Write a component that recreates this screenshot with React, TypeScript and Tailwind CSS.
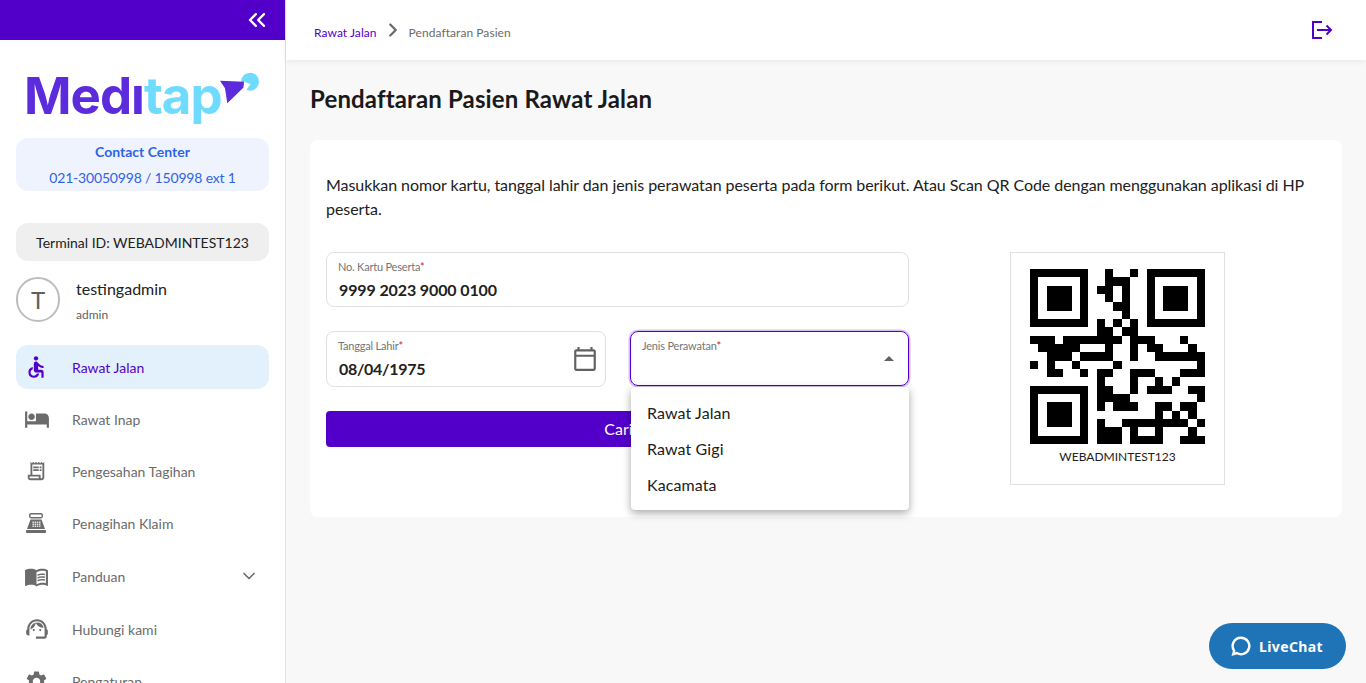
import { ChevronsLeft, ChevronDown, ChevronRight } from "lucide-react";
import { MdAccessible, MdHotel, MdMenuBook, MdOutlineSupportAgent, MdSettings, MdOutlineReceiptLong, MdOutlineCalendarToday } from "react-icons/md";

function CashRegister() {
  const cells = [8.6, 10.6, 12.6].flatMap((y) => [6.4, 8.6, 10.8, 13].map((x) => ({ x, y })));
  return (
    <svg viewBox="0 0 20 20" width={20} height={20} className="ml-[2px]">
      <rect x="3.7" y="0.7" width="12.6" height="4" rx="1.4" fill="none" stroke="currentColor" strokeWidth="1.4" />
      <path d="M4.5 6.5h11L19 16H1z" fill="currentColor" />
      <rect x="0" y="17" width="20" height="3" rx="0.8" fill="currentColor" />
      {cells.map((c) => (
        <rect key={`${c.x}-${c.y}`} x={c.x} y={c.y} width="1.5" height="1.2" fill="#fff" />
      ))}
    </svg>
  );
}

const menu = [
  { label: "Rawat Inap", icon: <MdHotel size={26} /> },
  { label: "Pengesahan Tagihan", icon: <MdOutlineReceiptLong size={22} className="ml-px" /> },
  { label: "Penagihan Klaim", icon: <CashRegister /> },
  { label: "Panduan", icon: <MdMenuBook size={25} />, chevron: true, extra: "mt-px" },
  { label: "Hubungi kami", icon: <MdOutlineSupportAgent size={26} />, extra: "mt-px" },
  { label: "Pengaturan", icon: <MdSettings size={25} /> },
];

const qrRows: Record<number, number[]> = {
  0: [9, 12],
  1: [9, 10, 11],
  2: [8, 9, 11],
  3: [9, 11],
  4: [10, 11],
  5: [11],
  6: [8, 10, 12],
  7: [8, 9, 11, 12],
  8: [0, 1, 2, 4, 5, 6, 7, 8, 9, 10, 12, 13, 14, 18],
  9: [1, 2, 3, 4, 5, 9, 12, 14, 15, 19],
  10: [2, 3, 4, 6, 7, 8, 9, 12, 15, 16, 17, 18, 19, 20],
  11: [0, 2, 5, 10, 20],
  12: [2, 3, 6, 8, 9, 12, 13, 14, 18, 19, 20],
  13: [8, 12, 15, 17],
  14: [8, 9, 12, 14, 15, 16, 19, 20],
  15: [8, 9, 10, 11, 20],
  16: [8, 10, 11, 12, 15, 16, 18, 19],
  17: [15, 17, 19],
  18: [8, 11, 12, 13, 14, 15, 16, 17, 18, 20],
  19: [8, 9, 10, 12, 15, 19],
  20: [8, 9, 10, 12, 13, 14, 15, 18, 19, 20],
};

function Finder({ x, y }: { x: number; y: number }) {
  return (
    <g>
      <rect x={x} y={y} width={7} height={7} fill="#000" />
      <rect x={x + 1} y={y + 1} width={5} height={5} fill="#fff" />
      <rect x={x + 2} y={y + 2} width={3} height={3} fill="#000" />
    </g>
  );
}

function QrCode() {
  return (
    <svg viewBox="0 0 21 21" width={175} height={175} shapeRendering="crispEdges">
      <Finder x={0} y={0} />
      <Finder x={14} y={0} />
      <Finder x={0} y={14} />
      {Object.entries(qrRows).map(([row, cols]) =>
        cols.map((col) => <rect key={`${row}-${col}`} x={col} y={Number(row)} width={1} height={1} fill="#000" />)
      )}
    </svg>
  );
}

function Logo() {
  return (
    <div className="relative h-[60px] pl-[24px] pt-px">
      <span className="block text-[51px] font-bold leading-[38px] tracking-[-1px] text-[#5b2bdc] font-['Inter',sans-serif]">
        Medı<span className="text-[#6fdcff]">tap</span>
      </span>
      <svg viewBox="0 0 42 34" width={42} height={34} className="absolute left-[219px] top-[-4px]">
        <circle cx="31" cy="9.7" r="9" fill="#6fdcff" />
        <path d="M25 9.7l6.5 2.3-4.5 6.5-3 .5z" fill="#fff" />
        <path d="M1 8.7l24 1-.7 6L8.3 31.3 6 16.3z" fill="#5b2bdc" />
      </svg>
    </div>
  );
}

function Sidebar() {
  return (
    <aside className="w-[286px] shrink-0 h-full overflow-hidden bg-white border-r border-[#e2e2e2]">
      <div className="flex h-10 items-center justify-end bg-[#5200c9] pr-[14px] text-white">
        <ChevronsLeft size={28} strokeWidth={2} />
      </div>
      <div className="mt-[36px]">
        <Logo />
      </div>
      <div className="mx-4 mt-[2px] flex h-[53px] flex-col items-center rounded-xl bg-[#eef3fd] pt-[4px] text-[14px] text-[#2f64e6]">
        <span className="font-bold leading-5">Contact Center</span>
        <span className="mt-[6px] leading-5 tracking-[-0.18px]">021-30050998 / 150998 ext 1</span>
      </div>
      <div className="mx-4 mt-8 flex h-[38px] items-center justify-center rounded-xl bg-[#efefef] text-[14px] text-[#212121]">
        Terminal ID: WEBADMINTEST123
      </div>
      <div className="mx-4 mt-4 flex h-[45px] items-start gap-4">
        <div className="flex h-[45px] w-[44px] items-center justify-center rounded-full border-2 border-[#bdbdbd] text-[24px] text-[#5f5f5f]">
          T
        </div>
        <div className="flex flex-col">
          <span className="text-[16px] leading-6 text-[#212121]">testingadmin</span>
          <span className="mt-[6px] text-[12px] leading-4 text-[#616161]">admin</span>
        </div>
      </div>
      <nav className="mx-4 mt-[23px] flex flex-col gap-2 text-[14px] text-[#6b6b6b]">
        <div className="flex h-11 items-center rounded-xl bg-[#e3f1fd] text-[#5200c9]">
          <span className="flex w-14 justify-start pl-[7px]">
            <MdAccessible size={26} />
          </span>
          Rawat Jalan
        </div>
        {menu.map((item) => (
          <div key={item.label} className={`flex h-11 items-center ${item.extra ?? ""}`}>
            <span className="flex w-14 justify-start pl-[8px]">{item.icon}</span>
            {item.label}
            {item.chevron ? <ChevronDown size={20} className="ml-auto mr-[10px]" /> : null}
          </div>
        ))}
      </nav>
    </aside>
  );
}

function Label({ text }: { text: string }) {
  return (
    <span className="text-[11px] leading-3 tracking-[-0.2px] text-[#757575]">
      {text}
      <span className="text-[#e0162b]">*</span>
    </span>
  );
}

export default function App() {
  return (
    <div className="flex h-[683px] overflow-hidden bg-[#f8f8f8] font-['Lato',sans-serif]">
      <Sidebar />
      <main className="flex min-w-0 flex-1 flex-col">
        <header className="flex h-[60px] items-center justify-between bg-white pl-7 pr-8 shadow-[0_1px_6px_rgba(0,0,0,0.08)]">
          <div className="flex items-center text-[12px] tracking-[0.06px]">
            <span className="mt-[6px] text-[#5200c9]">Rawat Jalan</span>
            <ChevronRight size={22} strokeWidth={2.5} className="ml-[5px] text-[#6b6b6b]" />
            <span className="ml-[5px] mt-[6px] text-[#6b6b6b]">Pendaftaran Pasien</span>
          </div>
          <svg viewBox="0 0 24 24" width={24} height={24} fill="none" stroke="#5200c9" strokeWidth="2">
            <path d="M12 4H3v16h9M7 12h14M16.5 7.5l4.5 4.5-4.5 4.5" />
          </svg>
        </header>
        <div className="px-6 pt-[24px]">
          <h1 className="text-[24px] font-bold leading-[30px] tracking-[0.14px] text-[#1a1a1a]">Pendaftaran Pasien Rawat Jalan</h1>
          <section className="mt-[26px] h-[377px] rounded-lg bg-white px-4 pt-[33px]">
            <p className="text-[16px] leading-6 tracking-[-0.06px] text-[#212121]">
              Masukkan nomor kartu, tanggal lahir dan jenis perawatan peserta pada form berikut. Atau Scan QR Code dengan menggunakan aplikasi di HP peserta.
            </p>
            <div className="mt-[31px] flex">
              <div className="w-[583px] shrink-0">
                <div className="flex h-[55px] flex-col rounded-lg border border-[#e0e0e0] pl-[11px] pt-[8px]">
                  <Label text="No. Kartu Peserta" />
                  <span className="mt-[7px] pl-px text-[16px] font-bold leading-5 tracking-[-0.12px] text-[#212121]">9999 2023 9000 0100</span>
                </div>
                <div className="mt-6 flex gap-6">
                  <div className="flex h-[56px] w-[280px] items-center justify-between rounded-lg border border-[#e0e0e0] pl-[11px] pr-[7px]">
                    <div className="flex flex-col">
                      <Label text="Tanggal Lahir" />
                      <span className="mt-[7px] pl-px text-[16px] font-bold leading-5 tracking-[-0.3px] text-[#212121]">08/04/1975</span>
                    </div>
                    <MdOutlineCalendarToday size={26} className="text-[#616161]" />
                  </div>
                  <div className="relative h-[55px] w-[279px]">
                    <div className="flex h-full items-start justify-between rounded-lg border-[1.5px] border-[#5200c9] pl-[11px] pr-[14px] pt-[8px] shadow-[0_0_0_1.5px_rgba(82,0,201,0.25)]">
                      <Label text="Jenis Perawatan" />
                      <span className="mt-[16px] h-0 w-0 border-x-[5px] border-b-[5px] border-x-transparent border-b-[#616161]" />
                    </div>
                    <ul className="absolute left-[1px] top-[56px] z-10 flex h-[123px] w-[278px] flex-col justify-center rounded bg-white text-[16px] tracking-[0.1px] text-[#212121] shadow-[0_3px_8px_rgba(0,0,0,0.35)]">
                      <li className="flex h-9 items-center pl-4">Rawat Jalan</li>
                      <li className="flex h-9 items-center pl-4">Rawat Gigi</li>
                      <li className="flex h-9 items-center pl-4">Kacamata</li>
                    </ul>
                  </div>
                </div>
                <button className="mt-6 h-9 w-full rounded bg-[#5200c9] pl-[2px] text-[16px] text-white">Cari</button>
              </div>
              <div className="ml-[101px] flex h-[233px] w-[215px] flex-col items-center border border-[#e0e0e0] pt-4">
                <QrCode />
                <span className="mt-[5px] text-[12px] leading-4 text-[#212121]">WEBADMINTEST123</span>
              </div>
            </div>
          </section>
        </div>
      </main>
      <div className="fixed bottom-[14px] right-[20px] flex h-[46px] w-[137px] items-center justify-center gap-[7px] rounded-full bg-[#1f74b8] pr-[2px] text-[14px] font-bold tracking-[0.4px] text-white font-['Noto_Sans',sans-serif]">
        <svg viewBox="0 0 24 24" width={22} height={22} fill="none" stroke="#fff" strokeWidth="2.6">
          <path d="M12 3a9 9 0 1 1-4.6 16.7L3.5 21l1-3.9A9 9 0 0 1 12 3z" />
        </svg>
        LiveChat
      </div>
    </div>
  );
}
